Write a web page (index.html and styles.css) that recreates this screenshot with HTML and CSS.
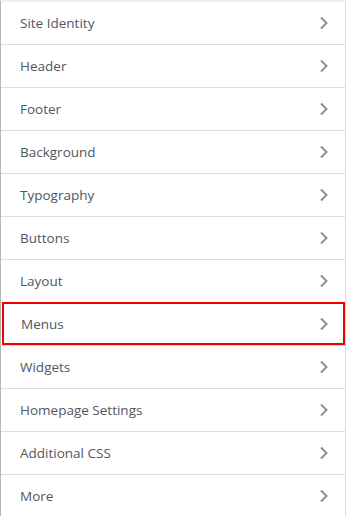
FILE: index.html
```html
<!DOCTYPE html>
<html>
<head>
<meta charset="utf-8">
<link rel="stylesheet" href="styles.css">
</head>
<body>
<div class="panel">
  <ul class="sections">
    <li class="item"><span class="label">Site Identity</span><svg class="chev" width="10" height="14" viewBox="0 0 10 14"><polyline points="2,1.5 7.5,7 2,12.5"/></svg></li>
    <li class="item"><span class="label">Header</span><svg class="chev" width="10" height="14" viewBox="0 0 10 14"><polyline points="2,1.5 7.5,7 2,12.5"/></svg></li>
    <li class="item"><span class="label">Footer</span><svg class="chev" width="10" height="14" viewBox="0 0 10 14"><polyline points="2,1.5 7.5,7 2,12.5"/></svg></li>
    <li class="item"><span class="label">Background</span><svg class="chev" width="10" height="14" viewBox="0 0 10 14"><polyline points="2,1.5 7.5,7 2,12.5"/></svg></li>
    <li class="item"><span class="label">Typography</span><svg class="chev" width="10" height="14" viewBox="0 0 10 14"><polyline points="2,1.5 7.5,7 2,12.5"/></svg></li>
    <li class="item"><span class="label">Buttons</span><svg class="chev" width="10" height="14" viewBox="0 0 10 14"><polyline points="2,1.5 7.5,7 2,12.5"/></svg></li>
    <li class="item"><span class="label">Layout</span><svg class="chev" width="10" height="14" viewBox="0 0 10 14"><polyline points="2,1.5 7.5,7 2,12.5"/></svg></li>
    <li class="item active"><span class="label">Menus</span><svg class="chev" width="10" height="14" viewBox="0 0 10 14"><polyline points="2,1.5 7.5,7 2,12.5"/></svg></li>
    <li class="item"><span class="label">Widgets</span><svg class="chev" width="10" height="14" viewBox="0 0 10 14"><polyline points="2,1.5 7.5,7 2,12.5"/></svg></li>
    <li class="item"><span class="label">Homepage Settings</span><svg class="chev" width="10" height="14" viewBox="0 0 10 14"><polyline points="2,1.5 7.5,7 2,12.5"/></svg></li>
    <li class="item"><span class="label">Additional CSS</span><svg class="chev" width="10" height="14" viewBox="0 0 10 14"><polyline points="2,1.5 7.5,7 2,12.5"/></svg></li>
    <li class="item"><span class="label">More</span><svg class="chev" width="10" height="14" viewBox="0 0 10 14"><polyline points="2,1.5 7.5,7 2,12.5"/></svg></li>
  </ul>
</div>
</body>
</html>
```

FILE: styles.css
```css
html, body {
  margin: 0;
  padding: 0;
  background: #ffffff;
}
body {
  font-family: "Open Sans", "Noto Sans", sans-serif;
}
.panel {
  width: 344px;
  border-left: 1px solid #b4b6b9;
  border-right: 1px solid #dcdcde;
  border-top: 2px solid #f0f0f1;
  background: #fff;
}
.sections {
  list-style: none;
  margin: 0;
  padding: 0;
}
.item {
  box-sizing: border-box;
  height: 43px;
  display: flex;
  align-items: center;
  justify-content: space-between;
  padding: 0 16px 0 19px;
  border-bottom: 1px solid #dcdcde;
  color: #50575e;
  font-size: 13.5px;
  font-weight: 500;
}
.item.active {
  box-shadow: inset 0 0 0 2px #f00000;
  margin-top: -1px;
  height: 44px;
  margin-left: 1px;
}
.chev {
  fill: none;
  stroke: #8c8f94;
  stroke-width: 2;
}
```
